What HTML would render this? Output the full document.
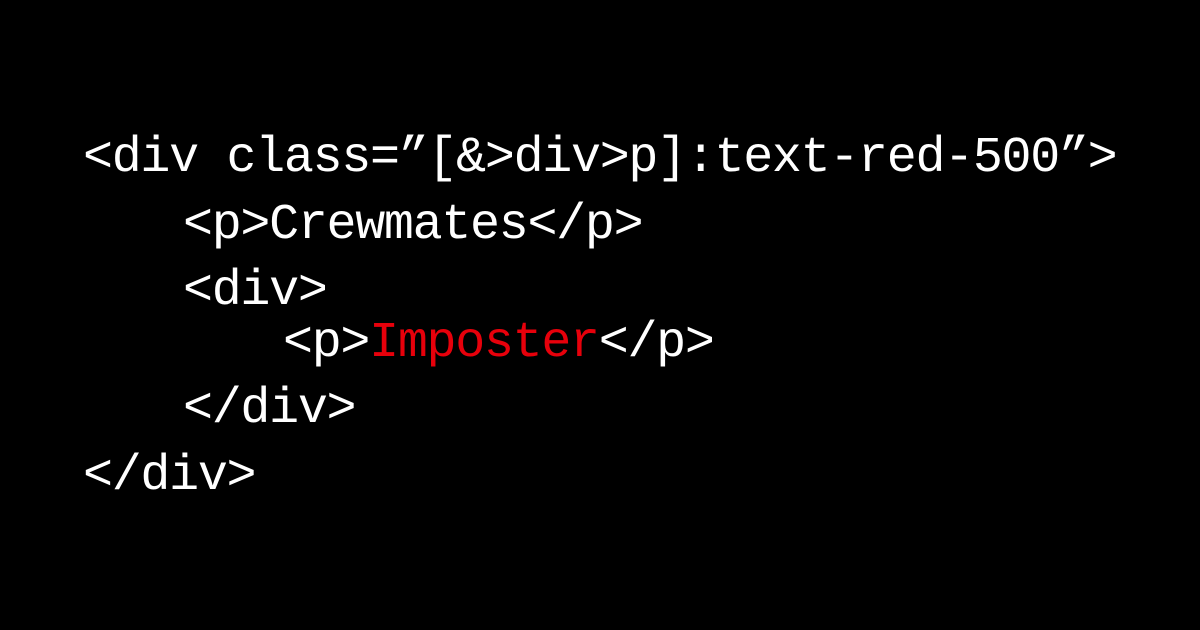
<!DOCTYPE html>
<html><head><style>
html,body{margin:0;padding:0;background:#000;width:1200px;height:630px;overflow:hidden}
.l{position:absolute;font-family:"Liberation Mono",monospace;font-size:50px;line-height:50px;letter-spacing:-1.3px;color:#fff;white-space:pre}
.r{color:#e7000b}
</style></head><body>
<div class="l" style="left:83px;top:134px">&lt;div class=”[&amp;&gt;div&gt;p]:text-red-500”&gt;</div>
<div class="l" style="left:183px;top:201px">&lt;p&gt;Crewmates&lt;/p&gt;</div>
<div class="l" style="left:183px;top:267px">&lt;div&gt;</div>
<div class="l" style="left:283px;top:319px">&lt;p&gt;<span class="r">Imposter</span>&lt;/p&gt;</div>
<div class="l" style="left:183px;top:385px">&lt;/div&gt;</div>
<div class="l" style="left:83px;top:452px">&lt;/div&gt;</div>
</body></html>
